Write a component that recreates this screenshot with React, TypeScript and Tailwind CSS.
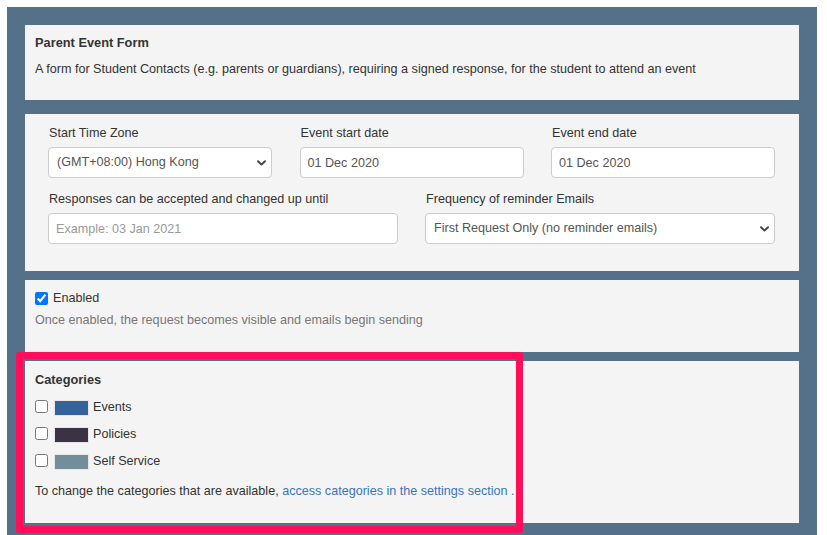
import React from "react";

const Chevron = () => (
  <svg
    className="pointer-events-none absolute right-[6px] top-1/2 -translate-y-1/2"
    width="9"
    height="6"
    viewBox="0 0 9 6"
    fill="none"
  >
    <path d="M1 1.2L4.5 4.6L8 1.2" stroke="#444" strokeWidth="1.9" strokeLinecap="round" strokeLinejoin="round" />
  </svg>
);

const Select = ({ value }: { value: string }) => (
  <div className="relative">
    <div className="h-[31px] w-full rounded-[4px] border border-[#ccc] bg-white pl-[8px] text-[12.6px] leading-[29px] text-[#555]">
      {value}
    </div>
    <Chevron />
  </div>
);

const Input = ({ value, placeholder }: { value?: string; placeholder?: string }) => (
  <input
    readOnly
    value={value ?? ""}
    placeholder={placeholder}
    className="h-[31px] w-full rounded-[4px] border border-[#ccc] bg-white px-[7px] text-[12.6px] text-[#555] outline-none placeholder:text-[#999]"
  />
);

const Label = ({ children }: { children: React.ReactNode }) => (
  <div className="mb-[5px] pl-px text-[12.6px] leading-[18px] text-[#333]">{children}</div>
);

const Category = ({ color, name }: { color: string; name: string }) => (
  <div className="flex h-[27px] items-center">
    <input type="checkbox" className="m-0 h-[13px] w-[13px]" />
    <span className={`ml-[6px] mr-[4px] mt-[2px] h-[16px] w-[35px] border border-[#e6e6e6] ${color}`} />
    <span className="text-[12.6px] leading-[18px] text-[#333]">{name}</span>
  </div>
);

export default function App() {
  return (
    <div
      className="relative h-[535px] w-[827px] overflow-hidden bg-white"
      style={{ fontFamily: '"Liberation Sans", Arial, sans-serif' }}
    >
      <div className="ml-[7px] mt-[7px] h-[528px] w-[810px] bg-[#557089] px-[18px] pt-[18px]">
        {/* Panel 1 */}
        <div className="h-[75px] bg-[#f4f4f4] px-[10px] pt-[9px]">
          <div className="text-[12.8px] font-bold leading-[18px] text-[#333]">Parent Event Form</div>
          <div className="mt-[8px] text-[12.6px] leading-[18px] text-[#333]">
            A form for Student Contacts (e.g. parents or guardians), requiring a signed response, for the student to attend an event
          </div>
        </div>

        {/* Panel 2 */}
        <div className="mt-[14px] h-[157px] bg-[#f4f4f4] pl-[23px] pr-[24px] pt-[10px]">
          <div className="grid grid-cols-[224px_224px_224px] justify-between">
            <div>
              <Label>Start Time Zone</Label>
              <Select value="(GMT+08:00) Hong Kong" />
            </div>
            <div>
              <Label>Event start date</Label>
              <Input value="01 Dec 2020" />
            </div>
            <div>
              <Label>Event end date</Label>
              <Input value="01 Dec 2020" />
            </div>
          </div>
          <div className="mt-[12px] grid grid-cols-[350px_350px] justify-between">
            <div>
              <Label>Responses can be accepted and changed up until</Label>
              <Input placeholder="Example: 03 Jan 2021" />
            </div>
            <div>
              <Label>Frequency of reminder Emails</Label>
              <Select value="First Request Only (no reminder emails)" />
            </div>
          </div>
        </div>

        {/* Panel 3 */}
        <div className="mt-[9px] h-[72px] bg-[#f4f4f4] px-[10px] pt-[9px]">
          <div className="flex h-[18px] items-center">
            <input type="checkbox" defaultChecked className="m-0 h-[13px] w-[13px]" />
            <span className="ml-[5px] text-[12.6px] leading-[18px] text-[#333]">Enabled</span>
          </div>
          <div className="mt-[4px] text-[12.6px] leading-[18px] text-[#777]">
            Once enabled, the request becomes visible and emails begin sending
          </div>
        </div>

        {/* Panel 4 */}
        <div className="mt-[9px] h-[162px] bg-[#f4f4f4] px-[10px] pt-[10px]">
          <div className="text-[12.8px] font-bold leading-[18px] text-[#333]">Categories</div>
          <div className="mt-[4px]">
            <Category color="bg-[#34629a]" name="Events" />
            <Category color="bg-[#3b3343]" name="Policies" />
            <Category color="bg-[#738e98]" name="Self Service" />
          </div>
          <div className="mt-[8px] text-[12.6px] leading-[18px] text-[#333]">
            To change the categories that are available,{" "}
            <span className="text-[#3a74b8]">access categories in the settings section</span>{" "}
            <span className="text-[#3a74b8]">.</span>
          </div>
        </div>
      </div>

      {/* Highlight annotation */}
      <div className="pointer-events-none absolute left-[16px] top-[352px] h-[181px] w-[507px] rounded-[3px] border-[7px] border-[#ff0f5a]" />
    </div>
  );
}
